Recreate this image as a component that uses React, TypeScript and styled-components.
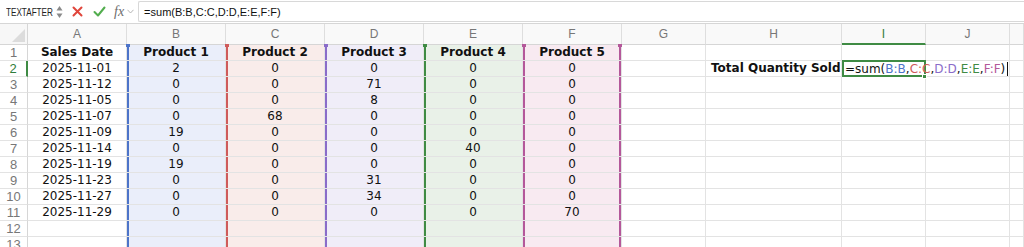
import styled, { createGlobalStyle, css } from 'styled-components'

type Tint = 'blue' | 'red' | 'purple' | 'green' | 'pink'

const tints: Record<Tint, { line: string; fill: string }> = {
  blue: { line: '#4d74c9', fill: '#eaeefa' },
  red: { line: '#cf5b5b', fill: '#f9ecea' },
  purple: { line: '#8a6cc9', fill: '#f0edf8' },
  green: { line: '#3f8b44', fill: '#e9f1e8' },
  pink: { line: '#b4589a', fill: '#f8eaf1' },
}

const columns = ['A', 'B', 'C', 'D', 'E', 'F', 'G', 'H', 'I', 'J', '']
const colTint: (Tint | undefined)[] = [undefined, 'blue', 'red', 'purple', 'green', 'pink']

const rows: (string | number)[][] = [
  ['Sales Date', 'Product 1', 'Product 2', 'Product 3', 'Product 4', 'Product 5'],
  ['2025-11-01', 2, 0, 0, 0, 0],
  ['2025-11-12', 0, 0, 71, 0, 0],
  ['2025-11-05', 0, 0, 8, 0, 0],
  ['2025-11-07', 0, 68, 0, 0, 0],
  ['2025-11-09', 19, 0, 0, 0, 0],
  ['2025-11-14', 0, 0, 0, 40, 0],
  ['2025-11-19', 19, 0, 0, 0, 0],
  ['2025-11-23', 0, 0, 31, 0, 0],
  ['2025-11-27', 0, 0, 34, 0, 0],
  ['2025-11-29', 0, 0, 0, 0, 70],
  [],
  [],
]

const formulaParts: { text: string; tint?: Tint }[] = [
  { text: '=sum(' },
  { text: 'B:B', tint: 'blue' },
  { text: ',' },
  { text: 'C:C', tint: 'red' },
  { text: ',' },
  { text: 'D:D', tint: 'purple' },
  { text: ',' },
  { text: 'E:E', tint: 'green' },
  { text: ',' },
  { text: 'F:F', tint: 'pink' },
  { text: ')' },
]

const GlobalStyle = createGlobalStyle`
  html, body {
    margin: 0;
    padding: 0;
    background: #ffffff;
    overflow: hidden;
  }
  body {
    font-family: "Liberation Sans", Arial, sans-serif;
  }
`

const Window = styled.div`
  width: 1024px;
  height: 247px;
  overflow: hidden;
  background: #fff;
`

const Toolbar = styled.div`
  height: 24px;
  display: flex;
  align-items: center;
  box-sizing: border-box;
  border-bottom: 1px solid #d6d6d6;
  background: #ffffff;
`

const NameBox = styled.div`
  width: 66px;
  flex-shrink: 0;
  display: flex;
  align-items: center;
  padding: 0 0 0 6px;
  box-sizing: border-box;
  color: #222;
  svg {
    flex-shrink: 0;
  }
`

/* the name box font is a condensed face in the original */
const NameText = styled.span`
  display: inline-block;
  width: 50px;
  font-size: 11px;
  white-space: nowrap;
  transform: scaleX(0.74);
  transform-origin: left center;
`

const IconButton = styled.div`
  width: 22px;
  height: 20px;
  display: flex;
  align-items: center;
  justify-content: center;
`

const Fx = styled.span`
  font-family: "Liberation Serif", "Times New Roman", serif;
  font-style: italic;
  font-size: 14px;
  color: #6d6d6d;
  margin-left: 4px;
`

const FormulaInput = styled.div`
  flex: 1;
  height: 19px;
  margin: 0 0 0 4px;
  border: 1px solid #d8d8d8;
  border-right: none;
  border-radius: 2px 0 0 2px;
  display: flex;
  align-items: center;
  padding-left: 5px;
  font-size: 11px;
  color: #111;
`

const Grid = styled.div`
  display: grid;
  grid-template-columns: 28px repeat(6, 99px) 84px 136px 84px 84px 1fr;
  grid-auto-rows: 16px;
  grid-template-rows: 21px;
`

const Corner = styled.div`
  position: relative;
  background: #f7f7f7;
  border-right: 1px solid #d6d6d6;
  border-bottom: 1px solid #d6d6d6;
  box-sizing: border-box;
  &::after {
    content: '';
    position: absolute;
    right: 2px;
    bottom: 2px;
    border-left: 13px solid transparent;
    border-bottom: 13px solid #dcdcdc;
  }
`

const ColHeader = styled.div<{ $active?: boolean }>`
  background: #f9f9f9;
  border-right: 1px solid #dedede;
  border-bottom: 1px solid #d6d6d6;
  box-sizing: border-box;
  display: flex;
  align-items: center;
  justify-content: center;
  font-size: 12px;
  color: #777;
  ${(p) =>
    p.$active &&
    css`
      color: #2f7d3b;
      border-bottom: 2px solid #3f8b44;
    `}
`

const RowHeader = styled.div<{ $active?: boolean }>`
  border-right: 1px solid #d6d6d6;
  border-bottom: 1px solid #e3e3e3;
  box-sizing: border-box;
  display: flex;
  align-items: center;
  justify-content: center;
  font-size: 13px;
  color: #777;
  ${(p) =>
    p.$active &&
    css`
      color: #2f7d3b;
      border-right: 2px solid #3f8b44;
    `}
`

const Cell = styled.div<{ $tint?: Tint; $last?: boolean; $bold?: boolean; $right?: boolean; $top?: boolean }>`
  position: relative;
  box-sizing: border-box;
  border-right: 1px solid #e3e3e3;
  border-bottom: 1px solid #e3e3e3;
  font-family: "DejaVu Sans", Verdana, sans-serif;
  font-size: 12px;
  font-weight: ${(p) => (p.$bold ? 700 : 400)};
  line-height: 15px;
  color: #111;
  white-space: nowrap;
  text-align: ${(p) => (p.$right ? 'right' : 'center')};
  padding: 0 ${(p) => (p.$right ? '5px' : '0')};
  background: ${(p) => (p.$tint ? tints[p.$tint].fill : '#fff')};
  ${(p) =>
    p.$tint &&
    css`
      box-shadow: inset 2px 0 0 ${tints[p.$tint].line}
        ${p.$last ? `, inset -2px 0 0 ${tints[p.$tint].line}` : ''};
    `}
  ${(p) =>
    p.$tint &&
    p.$top &&
    css`
      &::before {
        content: '';
        position: absolute;
        top: -1px;
        left: -1px;
        width: 4px;
        height: 3px;
        background: ${tints[p.$tint].line};
      }
    `}
  ${(p) =>
    p.$tint &&
    p.$top &&
    p.$last &&
    css`
      &::after {
        content: '';
        position: absolute;
        top: -1px;
        right: -1px;
        width: 4px;
        height: 3px;
        background: ${tints[p.$tint].line};
      }
    `}
`

const EditCell = styled.div`
  position: relative;
  z-index: 2;
  box-sizing: border-box;
  border: 2px solid #3f8b44;
  margin-top: -1px;
  height: 17px;
  font-family: "DejaVu Sans", Verdana, sans-serif;
  font-size: 12px;
  line-height: 13px;
  white-space: nowrap;
  overflow: visible;
  padding-left: 1px;
  color: #111;
  &::after {
    content: '';
    position: absolute;
    right: -3px;
    bottom: -4px;
    width: 3px;
    height: 3px;
    background: #3f8b44;
    border: 1px solid #fff;
  }
`

const Ref = styled.span<{ $tint?: Tint }>`
  color: ${(p) => (p.$tint ? tints[p.$tint].line : '#111')};
`

const Caret = styled.span`
  display: inline-block;
  width: 1px;
  height: 14px;
  margin-left: 2px;
  vertical-align: -3px;
  background: #111;
`

const Spinner = () => (
  <svg width="7" height="14" viewBox="0 0 7 14">
    <path d="M3.5 1 L6.5 5.5 H0.5 Z" fill="#8a8a8a" />
    <path d="M3.5 13 L6.5 8.5 H0.5 Z" fill="#8a8a8a" />
  </svg>
)

const Cross = () => (
  <svg width="11" height="11" viewBox="0 0 11 11">
    <path d="M1.5 1.5 L9.5 9.5 M9.5 1.5 L1.5 9.5" stroke="#e0453b" strokeWidth="2" strokeLinecap="round" />
  </svg>
)

const Check = () => (
  <svg width="13" height="11" viewBox="0 0 13 11">
    <path d="M1.5 6 L5 9.5 L11.5 1.5" stroke="#52ad4e" strokeWidth="2" fill="none" strokeLinecap="round" strokeLinejoin="round" />
  </svg>
)

const Chevron = () => (
  <svg width="7" height="5" viewBox="0 0 7 5" style={{ marginLeft: 3 }}>
    <path d="M0.5 0.8 L3.5 4 L6.5 0.8" stroke="#b5b5b5" strokeWidth="1" fill="none" />
  </svg>
)

const App = () => {
  return (
    <>
      <GlobalStyle />
      <Window>
        <Toolbar>
          <NameBox>
            <NameText>TEXTAFTER</NameText>
            <Spinner />
          </NameBox>
          <IconButton>
            <Cross />
          </IconButton>
          <IconButton>
            <Check />
          </IconButton>
          <Fx>fx</Fx>
          <Chevron />
          <FormulaInput>=sum(B:B,C:C,D:D,E:E,F:F)</FormulaInput>
        </Toolbar>

        <Grid>
          <Corner />
          {columns.map((c, i) => (
            <ColHeader key={i} $active={c === 'I'}>
              {c}
            </ColHeader>
          ))}

          {rows.map((row, r) => (
            <Row key={r} index={r} row={row} />
          ))}
        </Grid>
      </Window>
    </>
  )
}

const Row = ({ index, row }: { index: number; row: (string | number)[] }) => {
  const num = index + 1
  return (
    <>
      <RowHeader $active={num === 2}>{num}</RowHeader>
      {columns.map((c, i) => {
        if (num === 2 && c === 'H') {
          return (
            <Cell key={i} $bold $right>
              Total Quantity Sold
            </Cell>
          )
        }
        if (num === 2 && c === 'I') {
          return (
            <EditCell key={i}>
              {formulaParts.map((p, k) => (
                <Ref key={k} $tint={p.tint}>
                  {p.text}
                </Ref>
              ))}
              <Caret />
            </EditCell>
          )
        }
        const tint = colTint[i]
        return (
          <Cell key={i} $tint={tint} $last={c === 'F'} $top={num === 1} $bold={num === 1 && i < 6}>
            {i < 6 ? row[i] : ''}
          </Cell>
        )
      })}
    </>
  )
}

export default App
